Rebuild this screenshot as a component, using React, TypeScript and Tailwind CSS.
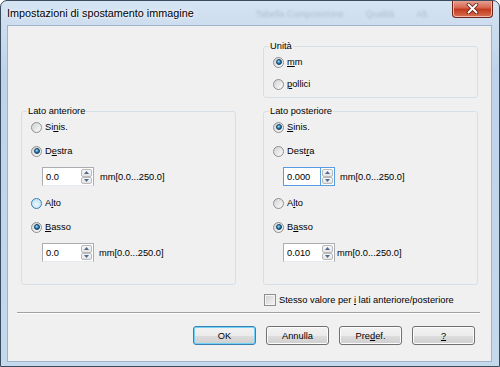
import type { ReactNode } from 'react';

function Radio({ checked = false, hot = false }: { checked?: boolean; hot?: boolean }) {
  return (
    <span
      className={
        hot
          ? 'flex h-[11px] w-[11px] shrink-0 items-center justify-center rounded-full border border-[#3c7fb1] bg-[radial-gradient(circle_at_50%_60%,#e9f7fd,#b3def5)]'
          : 'flex h-[11px] w-[11px] shrink-0 items-center justify-center rounded-full border border-[#8e8f8f] bg-[linear-gradient(135deg,#d2d2d2,#fcfcfc)]'
      }
    >
      {checked && (
        <span className="h-[6px] w-[6px] rounded-full border-[0.5px] border-[#0e3d63] bg-[radial-gradient(circle_at_40%_35%,#9fe2fa,#2478b2_55%,#0b4473)]" />
      )}
    </span>
  );
}

function Option({ checked, hot, children }: { checked?: boolean; hot?: boolean; children: ReactNode }) {
  return (
    <div className="flex h-[16px] items-center gap-[3px]">
      <Radio checked={checked} hot={hot} />
      <span>{children}</span>
    </div>
  );
}

function SpinBtn({ up = false }: { up?: boolean }) {
  return (
    <div className="flex flex-1 items-center justify-center rounded-[2px] border border-[#b9b9b9] bg-[linear-gradient(#f7f7f7,#e4e4e4)]">
      <svg width="5" height="3" viewBox="0 0 5 3">
        {up ? <path d="M0 3 L2.5 0 L5 3 Z" fill="#4e6a8d" /> : <path d="M0 0 L2.5 3 L5 0 Z" fill="#4e6a8d" />}
      </svg>
    </div>
  );
}

function Spin({ value, focused = false }: { value: string; focused?: boolean }) {
  return (
    <div className="flex h-[19px]">
      <div
        className={
          focused
            ? 'flex w-[38px] items-center border border-[#569de5] bg-white pl-[3px]'
            : 'flex w-[38px] items-center border border-[#abadb3] border-b-[#e3e9ef] border-r-0 bg-white pl-[3px]'
        }
      >
        {value}
      </div>
      <div
        className={
          focused
            ? 'flex w-[14px] flex-col border border-l-0 border-[#569de5] bg-white p-px'
            : 'flex w-[14px] flex-col border border-l-0 border-[#abadb3] border-b-[#e3e9ef] bg-white p-px'
        }
      >
        <SpinBtn up />
        <SpinBtn />
      </div>
    </div>
  );
}

function Group({ title, children, className }: { title: string; children: ReactNode; className: string }) {
  return (
    <fieldset className={className}>
      <legend className="ml-[5px] px-[1px] leading-[12px]">{title}</legend>
      {children}
    </fieldset>
  );
}

function Btn({ children, primary = false }: { children: ReactNode; primary?: boolean }) {
  return (
    <button
      className={
        primary
          ? 'flex h-[19px] w-[63px] items-center justify-center rounded-[3px] border border-[#3c7fb1] bg-[linear-gradient(#f2f2f2,#ebebeb_50%,#dddddd_50%,#cfcfcf)] shadow-[inset_0_0_0_1px_#6fd2f6]'
          : 'flex h-[19px] w-[63px] items-center justify-center rounded-[3px] border border-[#707070] bg-[linear-gradient(#f2f2f2,#ebebeb_50%,#dddddd_50%,#cfcfcf)] shadow-[inset_0_0_0_1px_#fcfcfc]'
      }
    >
      {children}
    </button>
  );
}

export default function App() {
  return (
    <div className="flex h-[367px] w-[500px] flex-col overflow-hidden rounded-t-[7px] border border-[#3a4b5e] bg-[linear-gradient(#d5e3f2,#bed3ea_70px,#c5d9ed)] font-['Liberation_Sans',Arial,sans-serif] text-[9.3px] leading-[12px] text-black">
      {/* title bar */}
      <div className="flex h-[24px] shrink-0 items-start">
        <div className="pl-[6px] pt-[5px] text-[10.8px] leading-[14px] [text-shadow:0_0_6px_#fff,0_0_3px_#fff]">
          Impostazioni di spostamento immagine
        </div>
        <div className="ml-[62px] flex gap-[22px] pt-[7px] text-[9px] text-[#6d7f93] opacity-35 blur-[0.8px]">
          <span>Tabella Composizione</span>
          <span>Qualità</span>
          <span>Alt.</span>
        </div>
        <div className="ml-auto mr-[6px] -mt-px flex h-[18px] w-[41px] items-center justify-center rounded-b-[4px] border border-t-0 border-[#6e2518] bg-[linear-gradient(#eaa99c,#d7664f_45%,#c2391f_55%,#d8704f)] shadow-[inset_0_0_0_1px_#f0b7aa]">
          <svg width="13" height="11" viewBox="0 0 13 11">
            <path d="M2.5 1.5 L10.5 9.5 M10.5 1.5 L2.5 9.5" stroke="#5a1c12" strokeWidth="3.6" strokeLinecap="round" />
            <path d="M2.5 1.5 L10.5 9.5 M10.5 1.5 L2.5 9.5" stroke="#fff" strokeWidth="2" strokeLinecap="round" />
          </svg>
        </div>
      </div>

      {/* client area */}
      <div className="mb-[4px] ml-[6px] mr-[7px] flex flex-1 flex-col border border-[#9fb4ca] bg-[#f0f0f0] pl-[13px] pr-[12px] pt-[14px]">
        <div className="grid grid-cols-[215px_215px] gap-x-[27px] gap-y-[7px]">
          <Group title="Unità" className="col-start-2 rounded-[3px] border border-[#d5dfe5] pb-[5px]">
            <div className="flex flex-col gap-[6px] pl-[9px] pt-[2px]">
              <Option checked>
                <u>m</u>m
              </Option>
              <Option>
                <u>p</u>ollici
              </Option>
            </div>
          </Group>

          <Group title="Lato anteriore" className="col-start-1 rounded-[3px] border border-[#d5dfe5] pb-[22px]">
            <div className="flex flex-col pl-[9px] pt-[2px]">
              <Option>
                Si<u>n</u>is.
              </Option>
              <div className="mt-[8px]">
                <Option checked>
                  D<u>e</u>stra
                </Option>
              </div>
              <div className="ml-[11px] mt-[8px] flex items-center gap-[6px]">
                <Spin value="0.0" />
                <span>mm[0.0...250.0]</span>
              </div>
              <div className="mt-[9px]">
                <Option hot>
                  A<u>l</u>to
                </Option>
              </div>
              <div className="mt-[8px]">
                <Option checked>
                  <u>B</u>asso
                </Option>
              </div>
              <div className="ml-[11px] mt-[8px] flex items-center gap-[5px]">
                <Spin value="0.0" />
                <span>mm[0.0...250.0]</span>
              </div>
            </div>
          </Group>

          <Group title="Lato posteriore" className="col-start-2 rounded-[3px] border border-[#d5dfe5] pb-[22px]">
            <div className="flex flex-col pl-[9px] pt-[2px]">
              <Option checked>
                <u>S</u>inis.
              </Option>
              <div className="mt-[8px]">
                <Option>
                  Dest<u>r</u>a
                </Option>
              </div>
              <div className="ml-[10px] mt-[8px] flex items-center gap-[5px]">
                <Spin value="0.000" focused />
                <span>mm[0.0...250.0]</span>
              </div>
              <div className="mt-[9px]">
                <Option>
                  A<u>l</u>to
                </Option>
              </div>
              <div className="mt-[8px]">
                <Option checked>
                  B<u>a</u>sso
                </Option>
              </div>
              <div className="ml-[10px] mt-[8px] flex items-center gap-[2px]">
                <Spin value="0.010" />
                <span>mm[0.0...250.0]</span>
              </div>
            </div>
          </Group>

          <div className="col-start-2 flex h-[16px] items-center gap-[3px] pl-[1px]">
            <span className="h-[12px] w-[12px] shrink-0 border border-[#8e8f8f] bg-[linear-gradient(135deg,#d0d0d0,#f6f6f6)] shadow-[inset_0_0_0_1px_#f4f4f4]" />
            <span>
              Stesso valore per <u>i</u> lati anteriore/posteriore
            </span>
          </div>
        </div>

        <div className="-ml-[4px] mr-[-1px] mt-[4px] h-[2px] border-b border-t border-b-white border-t-[#a0a0a0]" />

        <div className="mt-[12px] flex justify-end gap-[10px] pr-[4px]">
          <Btn primary>OK</Btn>
          <Btn>Annulla</Btn>
          <Btn>
            Pre<u>d</u>ef.
          </Btn>
          <Btn>
            <u>?</u>
          </Btn>
        </div>
      </div>
    </div>
  );
}
